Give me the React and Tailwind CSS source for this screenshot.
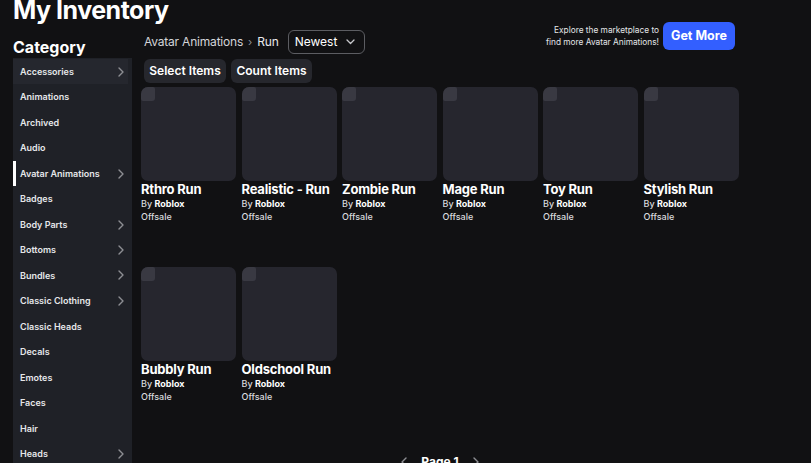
import React from "react";

const categories = [
  { name: "Accessories", chev: true, hover: true },
  { name: "Animations" },
  { name: "Archived" },
  { name: "Audio" },
  { name: "Avatar Animations", chev: true, active: true },
  { name: "Badges" },
  { name: "Body Parts", chev: true },
  { name: "Bottoms", chev: true },
  { name: "Bundles", chev: true },
  { name: "Classic Clothing", chev: true },
  { name: "Classic Heads" },
  { name: "Decals" },
  { name: "Emotes" },
  { name: "Faces" },
  { name: "Hair" },
  { name: "Heads", chev: true },
];

const items = [
  "Rthro Run",
  "Realistic - Run",
  "Zombie Run",
  "Mage Run",
  "Toy Run",
  "Stylish Run",
  "Bubbly Run",
  "Oldschool Run",
];

function Chevron({ className = "" }) {
  return (
    <svg width="6" height="10" viewBox="0 0 6 10" className={className}>
      <path d="M1 1 L5 5 L1 9" fill="none" stroke="#8d8e93" strokeWidth="1.4" strokeLinecap="round" strokeLinejoin="round" />
    </svg>
  );
}

function Card({ name }) {
  return (
    <div className="w-[95px]">
      <div className="relative h-[94px] w-[95px] rounded-[7px] bg-[#26262e]">
        <div className="absolute left-0 top-0 h-[14px] w-[14px] rounded-tl-[7px] rounded-br-[3px] rounded-tr-[2px] rounded-bl-[2px] bg-[#393942]" />
      </div>
      <div className="text-[13px] leading-[16px] font-bold text-white whitespace-nowrap tracking-[-0.2px]">{name}</div>
      <div className="text-[9px] leading-[13px] text-[#d8d9dd] font-medium">
        By <span className="font-bold text-white">Roblox</span>
      </div>
      <div className="text-[9px] leading-[13px] text-[#d8d9dd] font-medium">Offsale</div>
    </div>
  );
}

export default function App() {
  return (
    <div
      className="w-[811px] h-[463px] overflow-hidden bg-[#111113] text-white relative"
      style={{ fontFamily: "Inter, 'Noto Sans', sans-serif" }}
    >
      <h1 className="ml-[13px] text-[25px] leading-[20px] font-bold tracking-[-0.5px]">My Inventory</h1>
      <div className="flex">
        {/* Sidebar */}
        <div className="ml-[13px] w-[119px] shrink-0">
          <div className="mt-[17px] text-[16px] leading-[20px] font-bold">Category</div>
          <div className="mt-[0.5px] bg-[#1f2127] pr-[4px] pt-[1.5px]">
            {categories.map((c) => (
              <div
                key={c.name}
                className={`relative flex h-[25.47px] items-center justify-between pl-[7px] pr-[4px] ${c.hover ? "bg-[#25272e]" : ""}`}
              >
                {c.active && <div className="absolute left-0 top-0 h-full w-[3px] bg-white" />}
                <span className="text-[9px] font-semibold text-[#e6e7ea] whitespace-nowrap">{c.name}</span>
                {c.chev && <Chevron />}
              </div>
            ))}
          </div>
        </div>

        {/* Main */}
        <div className="ml-[9px] flex-1">
          <div className="mt-[2px] flex items-start justify-between pr-[76px]">
            <div className="mt-[8px] flex items-center pl-[3px]">
              <span className="text-[12px] text-[#d4d5d9] tracking-[-0.2px]">Avatar Animations</span>
              <span className="mx-[5px] text-[11px] text-[#8d8e93]">›</span>
              <span className="text-[12px] text-[#e8e9ec] tracking-[-0.2px]">Run</span>
              <div className="ml-[9px] flex h-[24px] w-[77px] items-center justify-between rounded-[6px] border border-[#5c5d62] pl-[6px] pr-[9px]">
                <span className="text-[12px] text-white">Newest</span>
                <svg width="9" height="6" viewBox="0 0 9 6">
                  <path d="M1 1 L4.5 4.5 L8 1" fill="none" stroke="#c8c9cd" strokeWidth="1.3" strokeLinecap="round" strokeLinejoin="round" />
                </svg>
              </div>
            </div>
            <div className="flex items-center">
              <div className="mr-[4px] text-right text-[8.3px] leading-[12px] text-[#e4e5e8]">
                <div>Explore the marketplace to</div>
                <div>find more Avatar Animations!</div>
              </div>
              <div className="flex h-[28px] w-[72px] items-center justify-center rounded-[6px] bg-[#335fff] text-[12.5px] font-bold text-white">
                Get More
              </div>
            </div>
          </div>

          <div className="mt-[5px] flex gap-[5px] pl-[3px]">
            <div className="flex h-[24px] w-[82px] items-center justify-center rounded-[6px] bg-[#26272d] text-[12px] font-semibold text-white">
              Select Items
            </div>
            <div className="flex h-[24px] w-[81px] items-center justify-center rounded-[6px] bg-[#26272d] text-[12px] font-semibold text-white">
              Count Items
            </div>
          </div>

          <div className="mt-[4px] grid grid-cols-[repeat(6,95px)] gap-x-[5.5px] gap-y-[44px]">
            {items.map((n) => (
              <Card key={n} name={n} />
            ))}
          </div>

          <div className="mt-[50px] flex items-center justify-center gap-[14px] pr-[72px]">
            <Chevron className="rotate-180" />
            <span className="text-[12px] font-bold text-white">Page 1</span>
            <Chevron />
          </div>
        </div>
      </div>
    </div>
  );
}
